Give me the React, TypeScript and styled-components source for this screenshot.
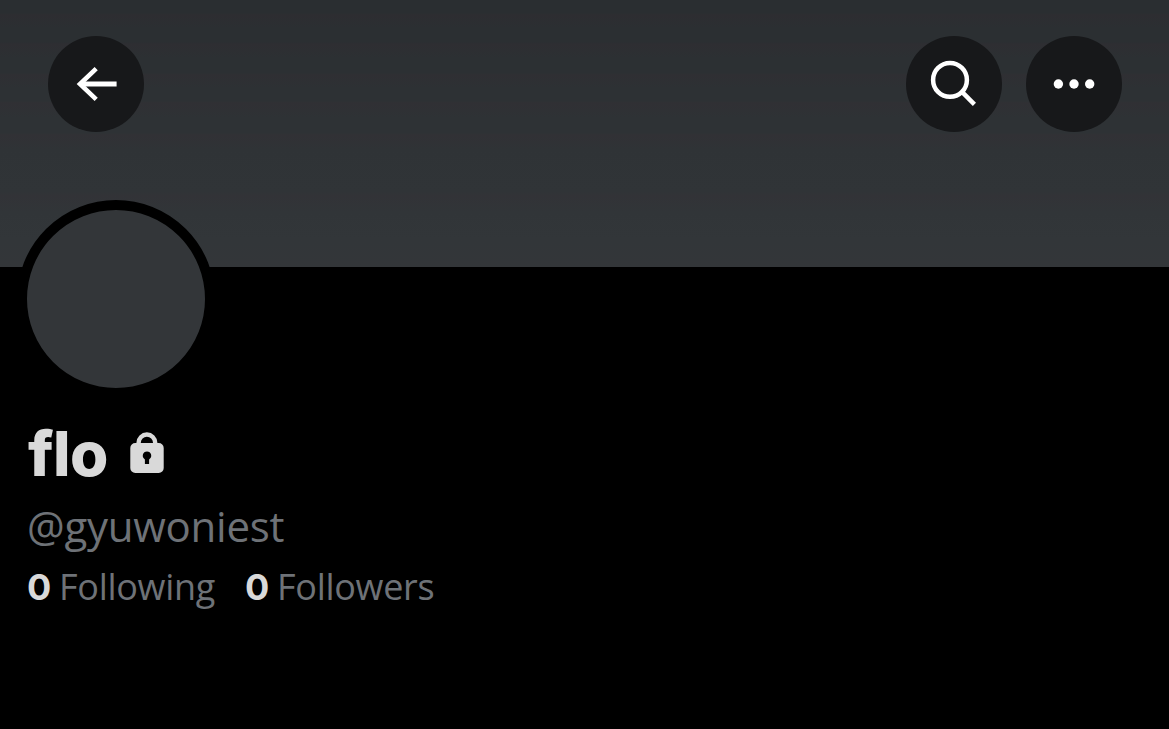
import styled, { createGlobalStyle } from "styled-components";

type StatType = {
  count: number;
  label: string;
};

const stats: StatType[] = [
  { count: 0, label: "Following" },
  { count: 0, label: "Followers" },
];

const BackIcon = () => (
  <svg width="96" height="96" viewBox="0 0 96 96" fill="none" stroke="#fff">
    <path d="M48.2 32.6 32 48l16.2 15.4" strokeWidth="4.6" />
    <path d="M32 48h36.6" strokeWidth="4.8" />
  </svg>
);

const SearchIcon = () => (
  <svg width="96" height="96" viewBox="0 0 96 96" fill="none" stroke="#fff">
    <circle cx="44" cy="43.9" r="16.9" strokeWidth="4.5" />
    <path d="M56 55.9 68.4 68.3" strokeWidth="4.5" />
  </svg>
);

const MoreIcon = () => (
  <svg width="96" height="96" viewBox="0 0 96 96" fill="#fff">
    <circle cx="32.4" cy="48" r="4.7" />
    <circle cx="48" cy="48" r="4.7" />
    <circle cx="63.7" cy="48" r="4.7" />
  </svg>
);

const LockIcon = () => (
  <svg width="34" height="42" viewBox="0 0 34 42">
    <path
      d="M8.6 14v-3.2a8.3 8.3 0 0 1 16.6 0V14"
      fill="none"
      stroke="#d9d9d9"
      strokeWidth="4.4"
    />
    <path
      fill="#d9d9d9"
      fillRule="evenodd"
      d="M5.3 11h23.4a5 5 0 0 1 5 5v20a5 5 0 0 1-5 5H5.3a5 5 0 0 1-5-5v-20a5 5 0 0 1 5-5ZM17 19.4a4.3 4.3 0 0 0-2.1 8V32.1h4.2V27.4a4.3 4.3 0 0 0-2.1-8Z"
    />
  </svg>
);

const App = () => {
  return (
    <Page>
      <GlobalStyle />
      <Banner>
        <IconButton aria-label="Back">
          <BackIcon />
        </IconButton>
        <Actions>
          <IconButton aria-label="Search">
            <SearchIcon />
          </IconButton>
          <IconButton aria-label="More">
            <MoreIcon />
          </IconButton>
        </Actions>
      </Banner>
      <Profile>
        <Avatar />
        <NameWrapper>
          <Name>flo</Name>
          <LockIcon />
        </NameWrapper>
        <Handle>@gyuwoniest</Handle>
        <Stats>
          {stats.map(({ count, label }) => (
            <Stat key={label}>
              <Count>{count}</Count>
              <Label>{label}</Label>
            </Stat>
          ))}
        </Stats>
      </Profile>
    </Page>
  );
};

export default App;

const GlobalStyle = createGlobalStyle`
  * {
    box-sizing: border-box;
  }

  body {
    margin: 0;
    background: #000;
    font-family: "Open Sans", "Noto Sans", sans-serif;
  }
`;

const Page = styled.div`
  width: 100%;
  height: 729px;
  overflow: hidden;
  background: #000;
`;

const Banner = styled.header`
  height: 267px;
  padding: 36px 47px 0 48px;

  display: flex;
  align-items: flex-start;
  justify-content: space-between;

  background: linear-gradient(
    #2a2e31 0px,
    #2a2e31 13px,
    #2d2d31 15px,
    #2b2f32 28px,
    #2b2f32 42px,
    #2e2e32 44px,
    #2c3033 58px,
    #2c3033 73px,
    #2f2f33 75px,
    #2d3134 88px,
    #2d3134 101px,
    #303034 103px,
    #2e3235 118px,
    #2e3235 133px,
    #313135 135px,
    #2f3336 150px,
    #303437 192px,
    #323337 196px,
    #313538 212px,
    #323639 240px,
    #333639 267px
  );
`;

const Actions = styled.div`
  display: flex;
  gap: 24px;
`;

const IconButton = styled.button`
  width: 96px;
  height: 96px;
  padding: 0;

  display: flex;

  border: none;
  border-radius: 50%;
  background: #17181a;
`;

const Profile = styled.main`
  padding-left: 27px;

  display: flex;
  flex-direction: column;
`;

const Avatar = styled.div`
  width: 198px;
  height: 198px;
  margin: -67px 0 0 -10px;

  border: 10px solid #000;
  border-radius: 50%;
  background: #333639;
`;

const NameWrapper = styled.div`
  height: 70px;
  margin-top: 20px;

  display: flex;
  align-items: center;
`;

const Name = styled.h1`
  width: 103px;
  margin: 0;
  padding: 2px 0 0 1px;

  color: #d9d9d9;
  font-family: "Inter", sans-serif;
  font-size: 62px;
  font-weight: 800;
  line-height: 70px;
  letter-spacing: -0.5px;
`;

const Handle = styled.span`
  height: 50px;
  margin-top: 13px;

  color: #6e7277;
  font-size: 42px;
  line-height: 50px;
  letter-spacing: -0.25px;
`;

const Stats = styled.div`
  height: 44px;
  margin-top: 14px;

  display: flex;
`;

const Stat = styled.div`
  width: 218px;

  display: flex;

  font-size: 36px;
  line-height: 44px;
`;

const Count = styled.span`
  width: 32px;

  color: #d9d9d9;
  font-family: "Inter", sans-serif;
  font-weight: 700;
`;

const Label = styled.span`
  color: #6e7277;
  letter-spacing: -0.3px;
`;
